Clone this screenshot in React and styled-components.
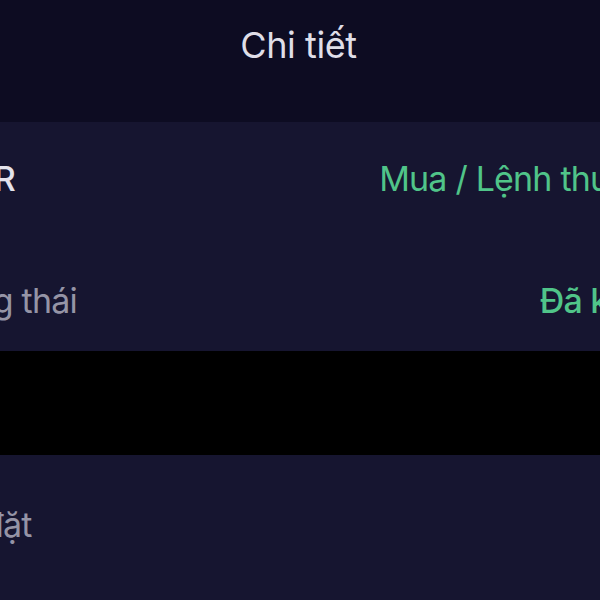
import React from 'react';
import styled, { createGlobalStyle } from 'styled-components';

const palette = {
  headerBg: '#0d0c22',
  panelBg: '#161530',
  title: '#dfdee8',
  primary: '#e4e3ec',
  muted: '#9594a6',
  green: '#50c489',
};

const GlobalStyle = createGlobalStyle`
  html, body {
    margin: 0;
    padding: 0;
    background: ${palette.panelBg};
  }
  body {
    font-family: Inter, 'Noto Sans', 'Liberation Sans', sans-serif;
    -webkit-font-smoothing: antialiased;
  }
`;

const Viewport = styled.div`
  width: 600px;
  height: 600px;
  overflow: hidden;
  background: ${palette.panelBg};
`;

// the phone screen is wider than the crop, so it hangs off both sides
const Screen = styled.div`
  width: 805px;
  margin-left: -105px;
  display: flex;
  flex-direction: column;
`;

const Header = styled.header`
  height: 122px;
  background: ${palette.headerBg};
  display: flex;
  justify-content: center;
  padding: 23px 0 0 2px;
  box-sizing: border-box;
`;

const Title = styled.h1`
  margin: 0;
  font-size: 36px;
  font-weight: 400;
  line-height: 44px;
  color: ${palette.title};
  letter-spacing: -0.4px;
`;

const Section = styled.section`
  background: ${palette.panelBg};
  padding: ${props => props.padding || '0'};
  display: flex;
  flex-direction: column;
  gap: ${props => props.gap || '0'};
`;

const Row = styled.div`
  height: 52px;
  padding: 0 32px 0 29px;
  display: flex;
  align-items: center;
  justify-content: space-between;
  white-space: nowrap;
`;

const Label = styled.span`
  font-size: 34px;
  font-weight: ${props => (props.strong ? 500 : 400)};
  color: ${props => (props.strong ? palette.primary : palette.muted)};
  letter-spacing: -0.8px;
`;

const Value = styled.span`
  font-size: 34px;
  font-weight: ${props => (props.strong ? 500 : 400)};
  color: ${palette.green};
  letter-spacing: -0.8px;
`;

const Redacted = styled.div`
  height: 104px;
  background: #000;
`;

const App = () => {
  return (
    <>
      <GlobalStyle />
      <Viewport>
        <Screen>
          <Header>
            <Title>Chi tiết</Title>
          </Header>
          <Section padding='30px 0 25px' gap='70px'>
            <Row>
              <Label strong>HDBR</Label>
              <Value>Mua / Lệnh thường</Value>
            </Row>
            <Row>
              <Label>Trạng thái</Label>
              <Value strong>Đã khớp</Value>
            </Row>
          </Section>
          <Redacted />
          <Section padding='43px 0 60px'>
            <Row>
              <Label>Giá đặt</Label>
            </Row>
          </Section>
        </Screen>
      </Viewport>
    </>
  );
};

export default App;
